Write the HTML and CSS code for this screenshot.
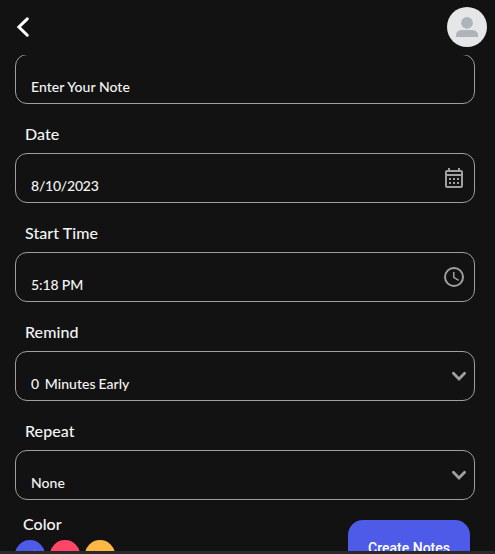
FILE: index.html
```html
<!DOCTYPE html>
<html lang="en">
<head>
<meta charset="utf-8">
<title>Create Note</title>
<link rel="stylesheet" href="styles.css">
</head>
<body>
<div class="app">
  <header class="topbar">
    <svg class="back" width="16" height="24" viewBox="0 0 16 24"><path d="M12.300 3.900 3.900 12l8.400 8.200" fill="none" stroke="#fff" stroke-width="3" stroke-linecap="round" stroke-linejoin="miter"/></svg>
    <svg class="avatar" width="40" height="40" viewBox="0 0 40 40"><circle cx="20" cy="20" r="20" fill="#e4e6e7"/><circle cx="20" cy="15.900" r="5.900" fill="#aeb4b9"/><path d="M9 30v-1.500C9 24.500 12 23 15.500 23h9c3.500 0 6.500 1.500 6.500 5.500V30z" fill="#aeb4b9"/></svg>
  </header>
  <main class="form">
    <div class="field"><span class="value">Enter Your Note</span></div>
    <label class="label">Date</label>
    <div class="field"><span class="value numeric">8/10/2023</span>
      <svg class="icon" width="24" height="24" viewBox="0 0 24 24" fill="#a0a0a0"><path fill-rule="evenodd" d="M19 4h-1V2h-2v2H8V2H6v2H5c-1.100 0-2 .9-2 2v14c0 1.100.9 2 2 2h14c1.100 0 2-.9 2-2V6c0-1.100-.9-2-2-2zm0 16H5V10h14v10zm0-12H5V6h14v2z"/><path d="M7 12h2v2H7zm4 0h2v2h-2zm4 0h2v2h-2zM7 16h2v2H7zm4 0h2v2h-2zm4 0h2v2h-2z"/></svg>
    </div>
    <label class="label">Start Time</label>
    <div class="field"><span class="value time">5:18 PM</span>
      <svg class="icon" width="24" height="24" viewBox="0 0 24 24" fill="none" stroke="#a0a0a0"><circle cx="12" cy="12" r="9" stroke-width="2"/><path d="M11.750 7v5.400l4.900 2.900" stroke-width="1.500"/></svg>
    </div>
    <label class="label">Remind</label>
    <div class="field"><span class="value remind">0  Minutes Early</span>
      <svg class="icon chevron" width="24" height="24" viewBox="0 0 24 24"><path d="M6.400 9.300 12 14.900l5.600-5.600" fill="none" stroke="#a0a0a0" stroke-width="2.800" stroke-linecap="round"/></svg>
    </div>
    <label class="label">Repeat</label>
    <div class="field"><span class="value">None</span>
      <svg class="icon chevron" width="24" height="24" viewBox="0 0 24 24"><path d="M6.400 9.300 12 14.900l5.600-5.600" fill="none" stroke="#a0a0a0" stroke-width="2.800" stroke-linecap="round"/></svg>
    </div>
    <div class="bottom">
      <div class="colors">
        <span class="color-title">Color</span>
        <div class="swatches">
          <span class="swatch blue"><svg width="16" height="16" viewBox="0 0 24 24"><path d="m4 12 5 5L20 6" fill="none" stroke="#fff" stroke-width="2"/></svg></span>
          <span class="swatch pink"></span>
          <span class="swatch yellow"></span>
        </div>
      </div>
      <button class="create">Create Notes</button>
    </div>
  </main>
  <div class="edge"></div>
</div>
</body>
</html>
```

FILE: styles.css
```css
* { box-sizing: border-box; }

body {
  margin: 0;
  background: #121212;
  color: #f5f5f5;
  font-family: Lato, "Liberation Sans", sans-serif;
}

.app {
  display: flex;
  flex-direction: column;
  height: 554px;
  overflow: hidden;
}

.topbar {
  flex: none;
  display: flex;
  justify-content: space-between;
  align-items: flex-start;
  height: 55px;
  padding: 7px 8px 0 15px;
}

.back { margin-top: 8px; }

.form {
  flex: 1;
  min-height: 0;
  overflow: hidden;
  padding: 0 20px 0 15px;
}

.form > .field:first-child { margin-top: -1px; }

.field {
  display: flex;
  justify-content: space-between;
  height: 50px;
  padding: 0 8px 0 15px;
  border: 1px solid #9e9e9e;
  border-radius: 12px;
}

.value {
  padding-top: 23px;
  font-size: 14px;
  line-height: 17px;
  font-weight: 500;
  letter-spacing: 0.05px;
  white-space: pre;
}

.numeric { letter-spacing: -0.22px; }
.time { letter-spacing: -0.12px; }
.remind { word-spacing: -0.8px; }

.icon { margin-top: 12px; }
.chevron { margin-right: -5px; }

.label {
  display: block;
  height: 49px;
  padding: 20px 0 0 10px;
  font-size: 16px;
  line-height: 20px;
  font-weight: 500;
  letter-spacing: 0.06px;
}

.bottom {
  display: flex;
  justify-content: space-between;
  align-items: flex-start;
  padding: 14px 5px 0 0;
}

.colors { display: flex; flex-direction: column; }

.color-title {
  padding-left: 8px;
  font-size: 16px;
  line-height: 20px;
  font-weight: 500;
  letter-spacing: 0.06px;
}

.swatches { display: flex; gap: 5px; margin-top: 6px; }

.swatch {
  display: flex;
  align-items: center;
  justify-content: center;
  width: 30px;
  height: 30px;
  border-radius: 50%;
}

.blue { background: #4e5ae8; }
.pink { background: #ff4667; }
.yellow { background: #ffb746; }

.create {
  width: 122px;
  height: 55px;
  margin-top: 6px;
  padding: 0;
  border: 0;
  border-radius: 15px;
  background: #4e5ae8;
  color: #fff;
  font: 500 14px/20px Roboto, sans-serif;
}

.edge { flex: none; height: 3px; background: #2a2829; }
```
